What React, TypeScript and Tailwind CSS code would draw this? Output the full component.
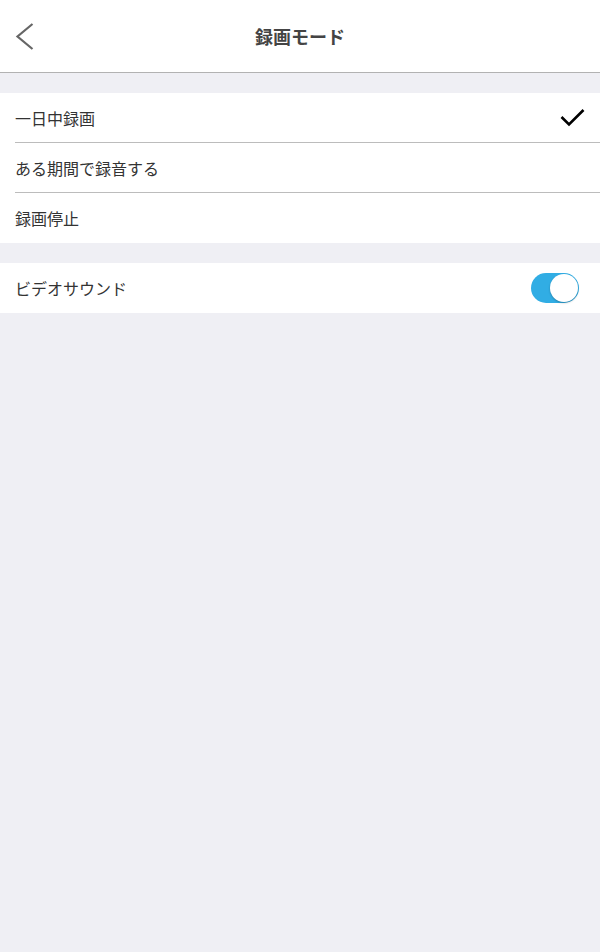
import React from "react";

const font = { fontFamily: '"Noto Sans CJK JP", "Noto Sans", sans-serif' };

export default function App() {
  return (
    <div className="w-[600px] h-[952px] bg-[#efeff4] flex flex-col text-[#333]" style={font}>
      <div className="h-[73px] bg-white border-b border-[#b2b2b2] relative flex items-center justify-center shrink-0">
        <button className="absolute left-0 top-0 h-[72px] w-[50px] flex items-center justify-center">
          <svg width="60" height="60" viewBox="0 0 60 60" className="absolute left-0 top-[10px]">
            <path d="M32.5 14 L17.5 26.5 L32.5 39" fill="none" stroke="#666" strokeWidth="2.2" />
          </svg>
        </button>
        <span className="text-[18px] font-bold text-[#444]">録画モード</span>
      </div>
      <div className="h-[20px]" />
      <div className="bg-white pl-[15px]">
        <div className="h-[50px] flex items-center pr-[14px] border-b border-[#bcbcbc]">
          <span className="text-[16px] flex-1">一日中録画</span>
          <svg width="26" height="22" viewBox="0 0 26 22">
            <path d="M1.5 10 L9 17.5 L23.5 3" fill="none" stroke="#000" strokeWidth="2.6" />
          </svg>
        </div>
        <div className="h-[50px] flex items-center border-b border-[#bcbcbc]">
          <span className="text-[16px]">ある期間で録音する</span>
        </div>
        <div className="h-[50px] flex items-center">
          <span className="text-[16px]">録画停止</span>
        </div>
      </div>
      <div className="h-[20px]" />
      <div className="bg-white h-[50px] flex items-center pl-[15px] pr-[21px]">
        <span className="text-[16px] flex-1">ビデオサウンド</span>
        <div className="w-[48px] h-[30px] rounded-full bg-[#31ade4] relative">
          <div className="absolute right-[1px] top-[1px] w-[28px] h-[28px] rounded-full bg-white shadow-[0_1px_2px_rgba(0,0,0,0.25)]" />
        </div>
      </div>
    </div>
  );
}
